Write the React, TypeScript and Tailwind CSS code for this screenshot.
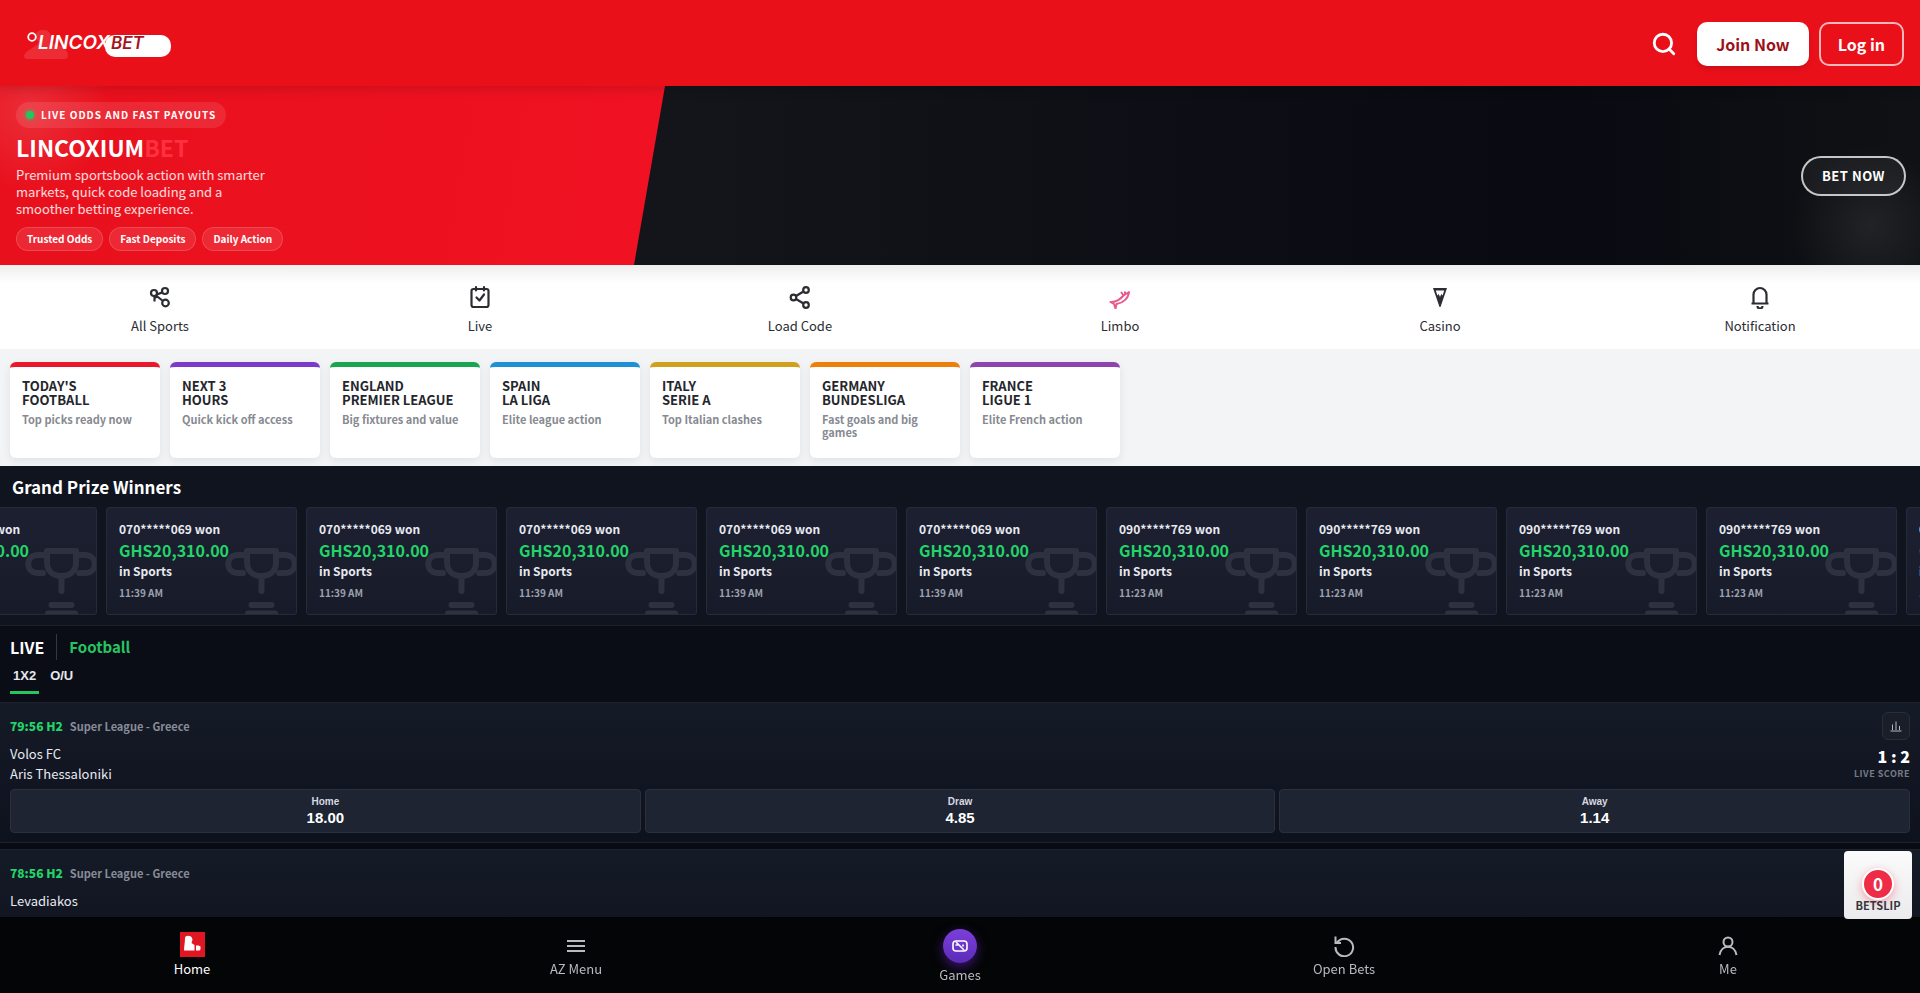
import React from 'react';
import { Search } from 'lucide-react';

const quickLinks = [
  { label: 'All Sports', icon: 'sports' },
  { label: 'Live', icon: 'live' },
  { label: 'Load Code', icon: 'share' },
  { label: 'Limbo', icon: 'limbo' },
  { label: 'Casino', icon: 'casino' },
  { label: 'Notification', icon: 'bell' },
];

const leagues = [
  { top: "TODAY'S", bottom: 'FOOTBALL', note: 'Top picks ready now', bar: 'border-[#e8192c]' },
  { top: 'NEXT 3', bottom: 'HOURS', note: 'Quick kick off access', bar: 'border-[#7c3aca]' },
  { top: 'ENGLAND', bottom: 'PREMIER LEAGUE', note: 'Big fixtures and value', bar: 'border-[#1aa651]' },
  { top: 'SPAIN', bottom: 'LA LIGA', note: 'Elite league action', bar: 'border-[#1e90d6]' },
  { top: 'ITALY', bottom: 'SERIE A', note: 'Top Italian clashes', bar: 'border-[#d0a11c]' },
  { top: 'GERMANY', bottom: 'BUNDESLIGA', note: 'Fast goals and big games', bar: 'border-[#ee7f0a]' },
  { top: 'FRANCE', bottom: 'LIGUE 1', note: 'Elite French action', bar: 'border-[#8e44ad]' },
];

const winners = [
  ...Array.from({ length: 6 }, () => ({ phone: '070*****069', time: '11:39 AM' })),
  ...Array.from({ length: 5 }, () => ({ phone: '090*****769', time: '11:23 AM' })),
];

const matches = [
  { clock: '79:56 H2', league: 'Super League - Greece', teams: ['Volos FC', 'Aris Thessaloniki'], score: '1 : 2', odds: ['18.00', '4.85', '1.14'] },
  { clock: '78:56 H2', league: 'Super League - Greece', teams: ['Levadiakos'], score: '', odds: [] },
];

const outcomes = ['Home', 'Draw', 'Away'];

function QuickIcon({ name }: { name: string }) {
  const common = {
    width: 24,
    height: 24,
    viewBox: '0 0 24 24',
    fill: 'none',
    stroke: 'currentColor',
    strokeWidth: 2.2,
    'aria-hidden': true,
  } as const;

  switch (name) {
    case 'sports':
      return (
        <svg {...common}>
          <circle cx="6" cy="8" r="3" />
          <circle cx="17" cy="6" r="3" />
          <circle cx="17.5" cy="18" r="3.3" />
          <path d="M8.8 9.5 14.3 7.4M8 10.5 15 16M6.500 11v5.500M6.500 13l3.500-2" />
        </svg>
      );
    case 'live':
      return (
        <svg {...common} strokeLinecap="round" strokeLinejoin="round">
          <rect x="3.5" y="4" width="17" height="18" rx="2" />
          <path d="M8 2v3.500M16 2v3.500M8.500 12.500l3 3L16 9.500" />
        </svg>
      );
    case 'share':
      return (
        <svg {...common}>
          <circle cx="18" cy="5" r="2.8" />
          <circle cx="5.5" cy="12.5" r="2.8" />
          <circle cx="18" cy="20" r="2.8" />
          <path d="m8 11 7.500-4.500M8 14l7.500 4.500" />
        </svg>
      );
    case 'limbo':
      return (
        <svg {...common} strokeWidth="2" strokeLinejoin="round">
          <path d="M2.500 17c6 .5 10-3 13-6.500l5.500-3.500c-.5 6-5.500 11-12.500 12l-1 4.500L6 19z" />
          <path d="M13 7l2.500 3.500M17 6.500v2.500" />
        </svg>
      );
    case 'casino':
      return (
        <svg {...common}>
          <path d="M5 3h14l-6.500 19h-1z" fill="currentColor" stroke="none" />
          <path d="M7.800 5.500h8.400l-1.600 5-1.300-1.500-1.300 3-1.300-3L9.400 10.500z" fill="white" stroke="none" />
        </svg>
      );
    default:
      return (
        <svg {...common} strokeLinejoin="round">
          <path d="M5.500 18V9.500a6.500 6.500 0 0 1 13 0V18M3.500 18.500h17M9.500 21a2.500 2.500 0 0 0 5 0" />
        </svg>
      );
  }
}

function Logo() {
  return (
    <svg width="160" height="44" viewBox="0 0 160 44" role="img" aria-label="LincoxBet">
      <path d="M4 34c1-6 13-9 15-14-5-3-5-12 4-12 8 0 9 6 6 13 8 0 19 5 19 12q0 4-4 4H8q-4 0-4-3z" fill="white" fillOpacity="0.12" />
      <text x="18" y="27" fill="white" fontFamily="Inter, sans-serif" fontStyle="italic" fontWeight="600" fontSize="19">LINCOX</text>
      <rect x="85" y="13" width="66" height="22" rx="10" fill="white" />
      <circle cx="12" cy="15" r="3.8" fill="none" stroke="white" strokeWidth="1.8" />
      <text x="91" y="27" fill="#a5141c" fontFamily="Inter, sans-serif" fontStyle="italic" fontWeight="600" fontSize="17">BET</text>
    </svg>
  );
}

function Header() {
  return (
    <header className="relative z-10 flex h-[86px] items-center justify-between bg-[#ea101a] pl-5 pr-4 pt-[2px] shadow-[0_2px_12px_rgba(0,0,0,0.16)]">
      <a href="#home"><Logo /></a>
      <div className="flex items-center">
        <button aria-label="Search" className="mr-5 text-white"><Search size={26} strokeWidth={2.6} /></button>
        <button className="mr-[10px] h-11 rounded-[10px] bg-white px-[19px] text-base font-bold text-[#9b1118] shadow-md">Join Now</button>
        <button className="h-11 rounded-[10px] border-2 border-white/70 px-[17px] text-base font-bold text-white">Log in</button>
      </div>
    </header>
  );
}

function Hero() {
  return (
    <section className="relative flex h-[179px] items-center justify-between overflow-hidden bg-[linear-gradient(90deg,#13151a_35%,#090a12_80%,#101114)] pl-4 pr-[14px] pt-px">
      <div className="absolute inset-0 bg-[linear-gradient(100deg,#e8101c_0%,#f01222_35%)] [clip-path:polygon(0_0,665px_0,634px_100%,0_100%)]" />
      <div className="absolute inset-0 bg-[radial-gradient(circle_at_30px_25px,rgba(255,255,255,0.12),transparent_80px),radial-gradient(circle_at_calc(100%-50px)_140px,rgba(255,255,255,0.08),transparent_80px)]" />
      <div className="relative text-white">
        <p className="flex h-[26px] w-fit items-center gap-[7px] rounded-full bg-white/10 px-[10px] text-[10px] font-bold tracking-[1px]">
          <span className="size-2 rounded-full bg-[#22c55e] shadow-[0_0_4px_#22c55e]" />
          LIVE ODDS AND FAST PAYOUTS
        </p>
        <h1 className="mt-[6px] text-[23px] font-bold leading-[26px]">LINCOXIUM<span className="text-[#ff3040]">BET</span></h1>
        <p className="mt-[6px] w-[260px] text-[13px] leading-[17px] text-white/85">Premium sportsbook action with smarter markets, quick code loading and a smoother betting experience.</p>
        <ul className="mt-[10px] flex gap-[6px] text-[10px] font-bold">
          {['Trusted Odds', 'Fast Deposits', 'Daily Action'].map((tag) => (
            <li key={tag} className="flex h-6 items-center rounded-full border border-white/15 bg-white/10 px-[10px]">{tag}</li>
          ))}
        </ul>
      </div>
      <button className="relative h-10 rounded-full border-2 border-white/75 bg-white/5 px-[19px] text-[13px] font-bold tracking-[0.5px] text-white">BET NOW</button>
    </section>
  );
}

function QuickNav() {
  return (
    <nav className="grid h-[84px] grid-cols-6 bg-[linear-gradient(#eeeeee,#ffffff_18px)]">
      {quickLinks.map((link) => (
        <a key={link.label} href="#quick" className="flex flex-col items-center gap-[7px] pt-5 text-[13px] leading-5 text-[#2b2d33]">
          <span className={link.icon === 'limbo' ? 'text-[#e75a8d]' : ''}><QuickIcon name={link.icon} /></span>
          {link.label}
        </a>
      ))}
    </nav>
  );
}

function Leagues() {
  return (
    <section className="flex h-[117px] gap-[10px] bg-[#f2f4f6] px-[10px] pt-[13px]">
      {leagues.map((item) => (
        <a key={item.bottom} href="#league" className={`h-24 w-[150px] shrink-0 rounded-md border-t-[5px] bg-white px-3 pt-3 shadow-[0_3px_10px_rgba(0,0,0,0.08)] ${item.bar}`}>
          <h3 className="text-[13px] font-bold leading-[14px] text-[#24262c]">{item.top}<br />{item.bottom}</h3>
          <p className="mt-[6px] text-[11px] font-bold leading-[13px] text-[#878a92]">{item.note}</p>
        </a>
      ))}
    </section>
  );
}

function Trophy() {
  return (
    <svg className="absolute bottom-0 right-0" width="71" height="72" viewBox="0 0 71 72" fill="none" stroke="#2d3140" strokeWidth="6" strokeLinecap="round" strokeLinejoin="round" aria-hidden="true">
      <path d="M22 9h29v11c0 9-6 14-14.500 14S22 29 22 20zM36.500 35v14M18 13h-5c-13 0-13 18 0 18h5M55 13h5c13 0 13 18 0 18h-6M26.500 63h20M23 71.500h27" />
    </svg>
  );
}

function Winners() {
  return (
    <section className="h-[160px] overflow-hidden border-b border-[#1b202b] bg-[#0f141e]">
      <h2 className="px-3 pt-2 text-[17px] font-bold leading-[26px] text-white">Grand Prize Winners</h2>
      <div className="-ml-[94px] mt-[7px] flex gap-[9px]">
        {winners.map((winner, i) => (
          <article key={i} className="relative h-[108px] w-[191px] shrink-0 overflow-hidden rounded-[3px] border border-[#272b39] bg-[linear-gradient(#1c2031,#171b29)] px-3">
            <Trophy />
            <div className="relative pt-3 font-bold text-[#e8eaf0]">
              <p className="text-xs leading-[18px]">{winner.phone} won</p>
              <p className="text-base leading-6 text-[#22d469]">GHS20,310.00</p>
              <p className="text-xs leading-[18px]">in Sports</p>
              <p className="mt-1 text-[10px] leading-[18px] text-[#9ca0ac]">{winner.time}</p>
            </div>
          </article>
        ))}
      </div>
    </section>
  );
}

function LiveHead() {
  return (
    <section className="h-[76px] bg-[#0a0d16] px-[10px] pt-2">
      <div className="flex h-[26px] items-center font-bold leading-[26px]">
        <h2 className="text-base leading-[26px] text-white">LIVE</h2>
        <a href="#football" className="ml-3 border-l border-[#343843] pl-3 text-[15px] leading-[26px] text-[#27c562]">Football</a>
      </div>
      <div className="mt-[3px] flex gap-2 font-['Liberation_Sans',sans-serif] text-[13px] font-bold leading-[26px] text-[#e6e8ee]">
        <button className="h-[31px] border-b-[3px] border-[#27c562] px-[3px] pb-[2px]">1X2</button>
        <button className="h-[31px] border-b-[3px] border-transparent px-[3px] pb-[2px]">O/U</button>
      </div>
    </section>
  );
}

function MatchCard({ match }: { match: (typeof matches)[number] }) {
  return (
    <article className="mb-[6px] h-[141px] border-y border-[#1d222d] bg-[linear-gradient(#151a27,#0e121d)] px-[10px]">
      <div className="flex justify-between">
        <div className="pt-[13px]">
          <div className="flex items-center gap-[7px] leading-5">
            <span className="text-xs font-black text-[#22d469]">{match.clock}</span>
            <span className="text-[11px] font-bold text-[#888c98]">{match.league}</span>
          </div>
          <div className="mt-2 text-[13px] leading-5 text-[#e8eaf0]">
            {match.teams.map((team) => <p key={team}>{team}</p>)}
          </div>
        </div>
        {match.score && (
          <div className="flex flex-col items-end pt-[9px]">
            <button aria-label="Match stats" className="flex size-7 items-center justify-center rounded-md border border-[#2a2e38] bg-[#1a1e28] text-[#b4b7c0]">
              <svg width="12" height="12" viewBox="0 0 12 12" stroke="currentColor" aria-hidden="true"><path d="M.5 11h11M2.500 10V4.500M6 10V1.500M9.500 10V6" /></svg>
            </button>
            <span className="mt-[6px] text-base font-black leading-5 text-white">{match.score}</span>
            <span className="text-[9px] font-bold leading-4 tracking-[0.5px] text-[#777b86]">LIVE SCORE</span>
          </div>
        )}
      </div>
      <div className="mt-[5px] grid grid-cols-3 gap-1">
        {match.odds.map((odd, i) => (
          <button key={outcomes[i]} className="flex h-11 flex-col items-center justify-center rounded border border-[#2b303c] bg-[#1e2431] pb-[2px] font-['Liberation_Sans',sans-serif] font-bold">
            <span className="text-[10px] leading-4 text-[#d6d9e0]">{outcomes[i]}</span>
            <span className="text-[15px] leading-4 text-white">{odd}</span>
          </button>
        ))}
      </div>
    </article>
  );
}

function BottomNav() {
  const item = 'flex flex-col items-center gap-1 text-[13px] leading-4';
  return (
    <nav className="fixed inset-x-0 bottom-0 grid h-[77px] grid-cols-5 border-t border-[#14161b] bg-[#040506] text-[#b9bbc0]">
      <a href="#home" className={`${item} pt-[15px] text-white`}>
        <svg width="25" height="25" viewBox="0 0 25 25" aria-hidden="true">
          <path fill="#e01722" d="M0 0h25v25H0z" />
          <path fill="white" d="M5 6c0-3 6-3 7 0 1 2 0 3-.5 5l3 2v5.500H4c0-4 1-8 1-12.500zM16 13.500h2.500l2 1v3l-1 1H16z" />
        </svg>
        Home
      </a>
      <a href="#menu" className={`${item} pt-[18px]`}>
        <svg width="22" height="22" viewBox="0 0 22 22" stroke="currentColor" strokeWidth="2" aria-hidden="true"><path d="M2 6h18M2 11h18M2 16h18" /></svg>
        AZ Menu
      </a>
      <a href="#games" className={`${item} pt-3`}>
        <span className="flex size-[34px] items-center justify-center rounded-full bg-[linear-gradient(#7c3fdb,#5b2bb8)] text-white shadow-[0_4px_12px_rgba(109,40,217,0.5)]">
          <svg width="18" height="18" viewBox="0 0 18 18" fill="none" stroke="currentColor" strokeWidth="1.6" aria-hidden="true">
            <rect x="2" y="4" width="14" height="10" rx="3" /><path d="m5 5 8 8M4.500 8h2.500M12 7.500v2" />
          </svg>
        </span>
        Games
      </a>
      <a href="#bets" className={`${item} pt-[18px]`}>
        <svg width="22" height="22" viewBox="0 0 22 22" fill="none" stroke="currentColor" strokeWidth="2" aria-hidden="true"><path d="M2.500 1.500v6.500H8M4 7.500A8.800 8.800 0 1 1 2.500 12M5.500 5.500v2" /></svg>
        Open Bets
      </a>
      <a href="#me" className={`${item} pt-[18px]`}>
        <svg width="22" height="22" viewBox="0 0 22 22" fill="none" stroke="currentColor" strokeWidth="2" aria-hidden="true"><circle cx="11" cy="7" r="4.5" /><path d="M2.500 20c2-11 15-11 17 0" /></svg>
        Me
      </a>
    </nav>
  );
}

export default function App() {
  return (
    <div className="h-screen overflow-hidden bg-[#080b14] font-['Noto_Sans_CJK_SC',sans-serif]">
      <Header />
      <Hero />
      <QuickNav />
      <Leagues />
      <Winners />
      <LiveHead />
      <main>
        {matches.map((match) => <MatchCard key={match.clock} match={match} />)}
      </main>
      <BottomNav />
      <button className="fixed bottom-[74px] right-2 flex size-[68px] flex-col items-center justify-end rounded bg-[linear-gradient(#fbfbfb,#ebebed)] pb-[7px] text-[#35363c]">
        <span className="flex size-8 items-center justify-center rounded-full border-2 border-white bg-[#ee2c46] text-[17px] font-bold text-white shadow-[0_3px_10px_rgba(238,44,70,0.4)]">0</span>
        <span className="pb-[2px] text-[11px] font-bold leading-[10px]">BETSLIP</span>
      </button>
    </div>
  );
}
